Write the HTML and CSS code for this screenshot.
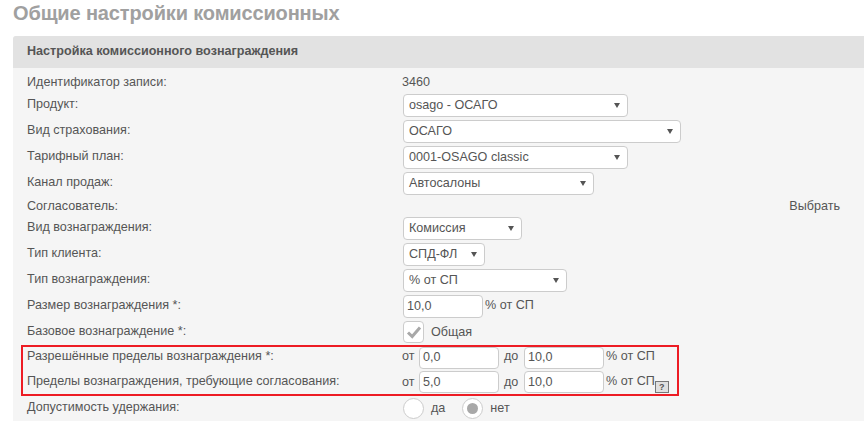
FILE: index.html
```html
<!DOCTYPE html>
<html lang="ru">
<head>
<meta charset="utf-8">
<title>Общие настройки комиссионных</title>
<link rel="stylesheet" href="styles.css">
</head>
<body>
<h1 class="title">Общие настройки комиссионных</h1>
<section class="panel">
  <h2 class="panel-head">Настройка комиссионного вознаграждения</h2>
  <div class="panel-body">
    <div class="row h-id"><span class="label">Идентификатор записи:</span><span class="value">3460</span></div>
    <div class="row"><span class="label">Продукт:</span><div class="sel w-222"><span>osago - ОСАГО</span><i class="arrow"></i></div></div>
    <div class="row"><span class="label">Вид страхования:</span><div class="sel w-276"><span>ОСАГО</span><i class="arrow"></i></div></div>
    <div class="row"><span class="label">Тарифный план:</span><div class="sel w-222"><span>0001-OSAGO classic</span><i class="arrow"></i></div></div>
    <div class="row"><span class="label">Канал продаж:</span><div class="sel w-188"><span>Автосалоны</span><i class="arrow"></i></div></div>
    <div class="row h-agree"><span class="label">Согласователь:</span><a class="pick">Выбрать</a></div>
    <div class="row"><span class="label">Вид вознаграждения:</span><div class="sel w-117"><span>Комиссия</span><i class="arrow"></i></div></div>
    <div class="row"><span class="label">Тип клиента:</span><div class="sel w-80"><span>СПД-ФЛ</span><i class="arrow"></i></div></div>
    <div class="row"><span class="label">Тип вознаграждения:</span><div class="sel w-162"><span>% от СП</span><i class="arrow"></i></div></div>
    <div class="row"><span class="label">Размер вознаграждения *:</span><div class="input w-79">10,0</div><span class="unit">% от СП</span></div>
    <div class="row"><span class="label">Базовое вознаграждение *:</span><div class="check"><svg width="16" height="14" viewBox="0 0 16 14"><path d="M2 7.5 6.2 11.5 14 2.5" fill="none" stroke="#a8a8a8" stroke-width="3"/></svg></div><span class="check-label">Общая</span></div>
    <div class="limits">
      <div class="limit-row first"><span class="label">Разрешённые пределы вознаграждения *:</span><span class="from">от</span><div class="input w-79">0,0</div><span class="to">до</span><div class="input w-79">10,0</div><span class="unit">% от СП</span></div>
      <div class="limit-row"><span class="label">Пределы вознаграждения, требующие согласования:</span><span class="from">от</span><div class="input w-79">5,0</div><span class="to">до</span><div class="input w-79">10,0</div><span class="unit">% от СП</span><span class="help">?</span></div>
    </div>
    <div class="row h-radio"><span class="label">Допустимость удержания:</span><div class="radio"></div><span class="radio-label">да</span><div class="radio on"></div><span class="radio-label">нет</span></div>
  </div>
</section>
</body>
</html>
```
FILE: styles.css
```css
* { box-sizing: border-box; }
body {
  margin: 0;
  height: 421px;
  overflow: hidden;
  background: #fff;
  font-family: "Liberation Sans", Arial, sans-serif;
  font-size: 12.6px;
  color: #555;
  padding-left: 13px;
}
.title {
  margin: 0;
  height: 36px;
  font-size: 20px;
  line-height: 26px;
  letter-spacing: -0.14px;
  font-weight: bold;
  color: #a0a0a0;
}
.panel { background: #f5f5f5; border-radius: 3px 0 0 0; height: 385px; }
.panel-head {
  margin: 0;
  height: 32px;
  background: #e2e2e2;
  padding: 0 14px;
  font-size: 12.6px;
  line-height: 30px;
  font-weight: bold;
  color: #555;
  border-radius: 3px 0 0 0;
}
.panel-body { padding: 4px 24px 0 14px; }
.row { display: flex; align-items: center; height: 26px; }
.h-id { height: 20px; }
.h-agree { height: 19px; }
.h-radio { height: 24px; }
.label { width: 376px; flex: none; padding-bottom: 2px; }
.h-id .label, .h-agree .label { padding-bottom: 0; }
.value { margin-left: -1px; }
.sel {
  height: 23px;
  background: #fff;
  border: 1px solid #ccc;
  border-radius: 4px;
  padding: 0 5px;
  display: flex;
  align-items: center;
  justify-content: space-between;
  color: #555;
}
.arrow {
  border-left: 3px solid transparent;
  border-right: 3px solid transparent;
  border-top: 5px solid #555;
  margin-right: 2px;
}
.w-222 { width: 225px; }
.w-276 { width: 278px; }
.w-188 { width: 191px; }
.w-117 { width: 119px; }
.w-80 { width: 82px; }
.w-162 { width: 164px; }
.w-79 { width: 80px; }
.input {
  height: 23px;
  background: #fff;
  border: 1px solid #ccc;
  border-radius: 4px;
  padding: 0 3px;
  line-height: 21px;
  font-size: 12.6px;
}
.unit { margin-left: 2px; padding-bottom: 2px; }
.pick { margin-left: auto; color: #555; }
.check {
  width: 21px;
  height: 22px;
  background: #fff;
  border: 1px solid #ccc;
  border-radius: 4px;
  display: flex;
  align-items: center;
  justify-content: center;
}
.check-label { margin-left: 7px; }
.limits {
  height: 51px;
  margin-left: -6px;
  border: 2px solid #ed1c24;
  width: 658px;
  padding-left: 4px;
}
.limit-row { display: flex; align-items: center; height: 25px; }
.limit-row.first { height: 22px; }
.limit-row .input { height: 22px; line-height: 20px; }
.limit-row.first .input { line-height: 18px; }
.limit-row.first .label,
.limit-row.first .from,
.limit-row.first .to,
.limit-row.first .unit { padding-bottom: 4px; }
.limit-row .label { width: 375px; }
.from { width: 17px; }
.to { width: 25px; padding-left: 5px; }
.help {
  width: 14px;
  height: 12px;
  align-self: flex-end;
  margin-bottom: 1px;
  background: #e0e0e0;
  border: 1px solid #777;
  font-size: 9px;
  font-weight: bold;
  line-height: 10px;
  text-align: center;
}
.radio {
  width: 21px;
  height: 21px;
  border-radius: 50%;
  background: #fff;
  border: 1px solid #ccc;
  display: flex;
  align-items: center;
  justify-content: center;
}
.radio.on::after {
  content: "";
  width: 11px;
  height: 11px;
  border-radius: 50%;
  background: #a8a8a8;
}
.radio-label { margin: 0 17px 0 7px; }
.radio-label:last-child { margin-right: 0; }
```
